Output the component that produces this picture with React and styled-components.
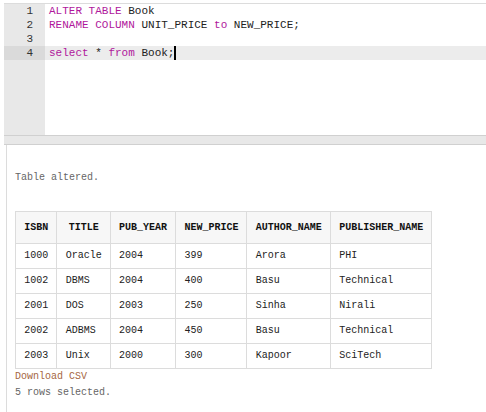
import React from "react";
import styled, { createGlobalStyle } from "styled-components";

const Global = createGlobalStyle`
  html, body { margin: 0; padding: 0; background: #fff; }
  body { width: 486px; height: 412px; overflow: hidden; font-family: "Liberation Mono", "DejaVu Sans Mono", monospace; }
`;

const Page = styled.div`
  padding: 3px 0 0 4px;
  height: 409px;
  display: flex;
  flex-direction: column;
`;

const Editor = styled.div`
  display: flex;
  height: 131px;
  border-top: 1px solid #dcdcdc;
  font-family: "Liberation Mono", "DejaVu Sans Mono", monospace;
  font-size: 11px;
  line-height: 14px;
`;

const Gutter = styled.div`
  width: 41px;
  background: #e8e8e8;
  display: flex;
  flex-direction: column;
  color: #333;
`;

const LineNo = styled.div`
  text-align: right;
  padding-right: 12px;
  height: 14px;
  background: ${(p) => (p.$active ? "#dadada" : "transparent")};
`;

const Code = styled.div`
  flex: 1;
  display: flex;
  flex-direction: column;
`;

const CodeLine = styled.div`
  height: 14px;
  padding-left: 4px;
  white-space: pre;
  color: #222;
  background: ${(p) => (p.$active ? "#ececec" : "transparent")};
`;

const Kw = styled.span`
  color: #b0179c;
`;

const Cursor = styled.span`
  display: inline-block;
  width: 2px;
  height: 14px;
  background: #000;
  vertical-align: top;
`;

const Splitter = styled.div`
  height: 8px;
  background: #e8e8e8;
  border-top: 1px solid #d0d0d0;
  border-bottom: 1px solid #d0d0d0;
`;

const Output = styled.div`
  flex: 1;
  margin-left: 2px;
  border-left: 1px solid #dcdcdc;
  padding: 25px 0 0 8px;
  font-family: "Liberation Mono", "DejaVu Sans Mono", monospace;
  font-size: 10px;
  line-height: 16px;
`;

const Msg = styled.div`
  color: ${(p) => p.$color || "#666"};
`;

const Table = styled.table`
  border-collapse: collapse;
  margin-top: 25px;
  font-size: 10px;
`;

const Th = styled.th`
  border: 1px solid #dcdcdc;
  background: #f7f7f7;
  height: 32px;
  padding: 0 8px 0 8.35px;
  font-weight: bold;
  color: #111;
  text-align: center;
  box-sizing: border-box;
`;

const Td = styled.td`
  border: 1px solid #dcdcdc;
  height: 25px;
  padding: 0 8px 0 8.35px;
  color: #222;
  text-align: left;
  box-sizing: border-box;
`;

const cols = ["ISBN", "TITLE", "PUB_YEAR", "NEW_PRICE", "AUTHOR_NAME", "PUBLISHER_NAME"];
const rows = [
  ["1000", "Oracle", "2004", "399", "Arora", "PHI"],
  ["1002", "DBMS", "2004", "400", "Basu", "Technical"],
  ["2001", "DOS", "2003", "250", "Sinha", "Nirali"],
  ["2002", "ADBMS", "2004", "450", "Basu", "Technical"],
  ["2003", "Unix", "2000", "300", "Kapoor", "SciTech"],
];

export default function App() {
  return (
    <>
      <Global />
      <Page>
        <Editor>
          <Gutter>
            <LineNo>1</LineNo>
            <LineNo>2</LineNo>
            <LineNo>3</LineNo>
            <LineNo $active>4</LineNo>
          </Gutter>
          <Code>
            <CodeLine><Kw>ALTER TABLE</Kw> Book</CodeLine>
            <CodeLine><Kw>RENAME COLUMN</Kw> UNIT_PRICE <Kw>to</Kw> NEW_PRICE;</CodeLine>
            <CodeLine> </CodeLine>
            <CodeLine $active><Kw>select</Kw> * <Kw>from</Kw> Book;<Cursor /></CodeLine>
          </Code>
        </Editor>
        <Splitter />
        <Output>
          <Msg>Table altered.</Msg>
          <Table>
            <thead>
              <tr>{cols.map((c) => <Th key={c}>{c}</Th>)}</tr>
            </thead>
            <tbody>
              {rows.map((r, i) => (
                <tr key={i}>{r.map((v, j) => <Td key={j}>{v}</Td>)}</tr>
              ))}
            </tbody>
          </Table>
          <Msg $color="#a5663f">Download CSV</Msg>
          <Msg>5 rows selected.</Msg>
        </Output>
      </Page>
    </>
  );
}
